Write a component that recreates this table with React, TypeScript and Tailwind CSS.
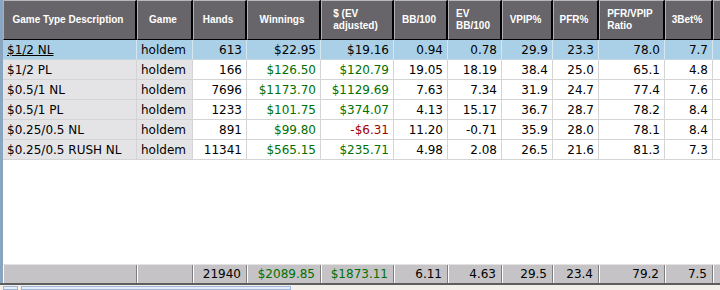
const cols = [
  { w: 'w-[134px]', label: ['Game Type Description'], align: 'left', shade: true },
  { w: 'w-[56px]', label: ['Game'], align: 'left', shade: true },
  { w: 'w-[54px]', label: ['Hands'], align: 'right' },
  { w: 'w-[74px]', label: ['Winnings'], align: 'right', money: true },
  { w: 'w-[73px]', label: ['$ (EV', 'adjusted)'], align: 'right', money: true },
  { w: 'w-[54px]', label: ['BB/100'], align: 'right' },
  { w: 'w-[54px]', label: ['EV', 'BB/100'], align: 'right' },
  { w: 'w-[51px]', label: ['VPIP%'], align: 'right' },
  { w: 'w-[46px]', label: ['PFR%'], align: 'right' },
  { w: 'w-[66px]', label: ['PFR/VPIP', 'Ratio'], align: 'right' },
  { w: 'w-[48px]', label: ['3Bet%'], align: 'right' },
];

const rows = [
  ['$1/2 NL', 'holdem', '613', '$22.95', '$19.16', '0.94', '0.78', '29.9', '23.3', '78.0', '7.7'],
  ['$1/2 PL', 'holdem', '166', '$126.50', '$120.79', '19.05', '18.19', '38.4', '25.0', '65.1', '4.8'],
  ['$0.5/1 NL', 'holdem', '7696', '$1173.70', '$1129.69', '7.63', '7.34', '31.9', '24.7', '77.4', '7.6'],
  ['$0.5/1 PL', 'holdem', '1233', '$101.75', '$374.07', '4.13', '15.17', '36.7', '28.7', '78.2', '8.4'],
  ['$0.25/0.5 NL', 'holdem', '891', '$99.80', '-$6.31', '11.20', '-0.71', '35.9', '28.0', '78.1', '8.4'],
  ['$0.25/0.5 RUSH NL', 'holdem', '11341', '$565.15', '$235.71', '4.98', '2.08', '26.5', '21.6', '81.3', '7.3'],
];

const totals = ['', '', '21940', '$2089.85', '$1873.11', '6.11', '4.63', '29.5', '23.4', '79.2', '7.5'];

// only the two money columns get coloured
const valueColor = (v: string, money?: boolean) => {
  if (!money) return 'text-black';
  return v.startsWith('-') ? 'text-[#a00000]' : 'text-[#007000]';
};

const HeaderRow = () => (
  <div className="flex h-[40px] shrink-0">
    {cols.map((c, i) => (
      <div
        key={i}
        className={`${c.w} shrink-0 flex items-center justify-center bg-[#67656a] border-t border-l border-t-[#b8b8bc] border-l-[#b0b0b4] border-r-2 border-r-black border-b border-b-black pr-[3px]`}
      >
        <div className="text-left text-white font-bold text-[10px] leading-[12px]">
          {c.label.map((l, j) => (
            <div key={j}>{l}</div>
          ))}
        </div>
      </div>
    ))}
    <div className="flex-1 bg-[#67656a] border-t border-l border-t-[#b8b8bc] border-l-[#b0b0b4] border-b border-b-black" />
  </div>
);

const BodyRow = ({ data, selected }: { data: string[]; selected: boolean }) => (
  <div className={`flex h-[20px] shrink-0 ${selected ? 'bg-[#aad0e8]' : ''}`}>
    {cols.map((c, i) => {
      const bg = selected ? '' : c.shade ? 'bg-[#e4e4e6]' : 'bg-white';
      const line = selected ? 'border-r-[#d6e6f0] border-b-[#c6d6e0]' : 'border-r-[#d4d4d4] border-b-[#d4d4d4]';
      const color = selected ? 'text-black' : valueColor(data[i], c.money);
      return (
        <div
          key={i}
          className={`${c.w} shrink-0 flex items-center border-r border-b ${line} ${bg} ${
            c.align === 'left' ? 'justify-start pl-[4px]' : 'justify-end pr-[4px]'
          }`}
        >
          <span className={`${color} text-[12px] whitespace-nowrap ${selected && i === 0 ? 'underline' : ''}`}>
            {data[i]}
          </span>
        </div>
      );
    })}
    <div className={`flex-1 border-b ${selected ? 'border-b-[#c6d6e0]' : 'border-b-[#d4d4d4] bg-white'}`} />
  </div>
);

const FooterRow = () => (
  <div className="flex h-[19px] shrink-0 bg-[#c5c3c5] border-t border-t-[#e2e2e2]">
    {cols.map((c, i) => (
      <div
        key={i}
        className={`${c.w} shrink-0 flex items-center justify-end pr-[5px] border-l border-l-white border-r border-r-[#7e7e7e]`}
      >
        <span className={`${valueColor(totals[i], c.money)} text-[12px] whitespace-nowrap`}>{totals[i]}</span>
      </div>
    ))}
    <div className="flex-1 border-l border-l-white" />
  </div>
);

export default function App() {
  return (
    <div
      className="w-[720px] h-[290px] overflow-hidden flex flex-col bg-white"
      style={{ fontFamily: '"DejaVu Sans", Verdana, sans-serif' }}
    >
      <div className="flex flex-1 min-h-0">
        <div className="w-[3px] shrink-0 bg-[#8aa5bf]" />
        <div className="flex-1 flex flex-col min-w-0">
          <div style={{ fontFamily: '"Liberation Sans", Arial, sans-serif' }}>
            <HeaderRow />
          </div>
          {rows.map((r, i) => (
            <BodyRow key={i} data={r} selected={i === 0} />
          ))}
          <div className="flex-1 bg-white" />
          <FooterRow />
        </div>
      </div>
      <div className="h-[2px] shrink-0 bg-[#5e5e5e]" />
      <div className="h-[5px] shrink-0 bg-[#f3f0ec] flex gap-[3px] pl-[3px] pt-[1px]">
        <div className="w-[15px] border border-[#9eb4d8] bg-[#e8eef8]" />
        <div className="w-[270px] border border-[#9eb4d8] bg-[#e4ecfa]" />
      </div>
    </div>
  );
}
